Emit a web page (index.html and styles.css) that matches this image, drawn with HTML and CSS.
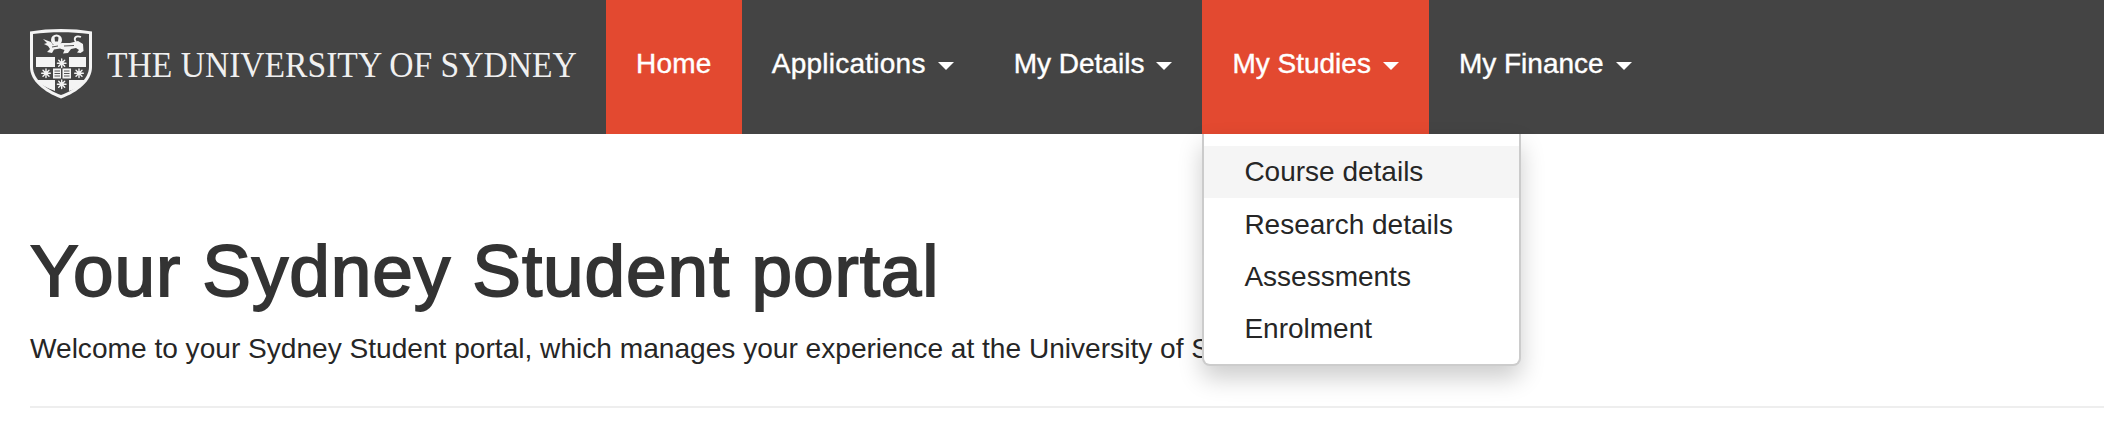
FILE: index.html
```html
<!DOCTYPE html>
<html lang="en">
<head>
<meta charset="utf-8">
<title>Your Sydney Student portal</title>
<link rel="stylesheet" href="styles.css">
</head>
<body>
<header class="navbar">
  <a class="brand" href="#">
    <svg class="crest" viewBox="0 0 62 70" aria-hidden="true">
      <path d="M0 2.5 C20 -0.8 42 -0.8 62 2.5 V38 C62 52 48 63 31 69.5 C14 63 0 52 0 38 Z" fill="#f4f4f4"/>
      <path d="M3 5 C21 2.5 41 2.5 59 5 V38 C59 50 46 60.5 31 66 C16 60.5 3 50 3 38 Z" fill="#444"/>
      <path d="M6 28 H25 V38 H6 Z M39 28 H56 V38 H39 Z" fill="#f4f4f4"/>
      <path d="M7 51 H25 V62 C17 59 11 56 7 51 Z M39 51 H55.5 C52 56 46 60 39 62 Z" fill="#f4f4f4"/>
      <g fill="#f4f4f4">
        <circle cx="26.5" cy="11" r="5.5"/>
        <path d="M13 10 L21 13 L23 16 L32 14 L40 14 L48 12 L53 15 L53.5 22 L50.5 24 L47 23.5 L49 21 L46 19 L41 20 L38 24 L33 24.5 L34.5 21 L30 19.5 L24 20.5 L22 24 L17 23 L20 20 L18 17 L14 15 L17 14 Z"/>
      </g>
      <path d="M46 13 C43 9 46 6 51 8" fill="none" stroke="#f4f4f4" stroke-width="1.8"/>
      <path d="M24.5 8.5 C25.5 7 27.5 7 28.5 8.5 L28 12.5 L25 12.5 Z" fill="#444"/>
      <path d="M34 17 L44 16.5 M22 18 L28 17" stroke="#444" stroke-width="0.9"/>
      <g stroke="#f4f4f4" stroke-width="1.4" stroke-linecap="round">
        <path d="M31.7 30 V38.6 M27.4 34.3 H36 M28.7 31.3 L34.7 37.3 M34.7 31.3 L28.7 37.3"/>
        <path d="M31.7 51 V59.6 M27.4 55.3 H36 M28.7 52.3 L34.7 58.3 M34.7 52.3 L28.7 58.3"/>
        <path d="M16 40 V48.6 M11.7 44.3 H20.3 M13 41.3 L19 47.3 M19 41.3 L13 47.3"/>
        <path d="M49 40 V48.6 M44.7 44.3 H53.3 M46 41.3 L52 47.3 M52 41.3 L46 47.3"/>
      </g>
      <path d="M23 39.5 H31 V49.5 H23 Z M32.5 39.5 H41 V49.5 H32.5 Z" fill="#f4f4f4"/>
      <path d="M24.5 42 H30 M24.5 44.5 H30 M24.5 47 H30 M34 42 H39.5 M34 44.5 H39.5 M34 47 H39.5" stroke="#444" stroke-width="0.9"/>
    </svg>
    <span class="wordmark">THE UNIVERSITY OF SYDNEY</span>
  </a>
  <nav class="menu">
    <a class="menu-link menu-link--wide is-active" href="#">Home</a>
    <a class="menu-link menu-link--wide" href="#">Applications<span class="caret"></span></a>
    <a class="menu-link" href="#">My Details<span class="caret"></span></a>
    <div class="menu-item">
      <a class="menu-link is-active" href="#">My Studies<span class="caret"></span></a>
      <ul class="dropdown">
        <li><a class="dropdown-link is-hover" href="#">Course details</a></li>
        <li><a class="dropdown-link" href="#">Research details</a></li>
        <li><a class="dropdown-link" href="#">Assessments</a></li>
        <li><a class="dropdown-link" href="#">Enrolment</a></li>
      </ul>
    </div>
    <a class="menu-link" href="#">My Finance<span class="caret"></span></a>
  </nav>
</header>
<main class="content">
  <h1 class="title">Your Sydney Student portal</h1>
  <p class="lead">Welcome to your Sydney Student portal, which manages your experience at the University of Sydney.</p>
  <hr class="rule">
</main>
</body>
</html>
```

FILE: styles.css
```css
* { box-sizing: border-box; }
html, body { margin: 0; padding: 0; }
body {
  background: #fff;
  color: #333;
  font-family: "Liberation Sans", Arial, sans-serif;
  font-size: 28px;
  line-height: 40px;
  overflow: hidden;
}
a { text-decoration: none; color: inherit; }

.navbar {
  display: flex;
  height: 134px;
  background: #444;
}
.brand {
  display: flex;
  align-items: center;
  gap: 15px;
  width: 606px;
  padding: 0 0 6px 30px;
  color: #f0f0f0;
}
.crest { width: 62px; height: 70px; flex: none; }
.wordmark {
  font-family: "Liberation Serif", "Times New Roman", serif;
  font-size: 36.5px;
  line-height: 40px;
  white-space: nowrap;
  margin-top: 2px;
  transform: scaleX(.92);
  transform-origin: left center;
}
.menu { display: flex; height: 134px; }
.menu-item { position: relative; display: flex; }
.menu-link {
  display: flex;
  align-items: center;
  height: 134px;
  padding: 0 30px 6px;
  color: #fff;
  -webkit-text-stroke: 0.4px #fff;
  white-space: nowrap;
}
.menu-link--wide { letter-spacing: .25px; }
.menu-link.is-active { background: #e34930; }
.caret {
  width: 0;
  height: 0;
  margin-left: 12px;
  margin-top: 4px;
  border-top: 8px solid #fff;
  border-left: 8px solid transparent;
  border-right: 8px solid transparent;
}
.dropdown {
  position: absolute;
  top: 134px;
  left: 0;
  width: 319px;
  margin: 0;
  padding: 12px 0 0;
  list-style: none;
  background: #fff;
  border: 2px solid rgba(0, 0, 0, .2);
  border-top: 0;
  border-radius: 0 0 8px 8px;
  box-shadow: 0 12px 24px rgba(0, 0, 0, .2);
  height: 232px;
}
.dropdown-link {
  display: flex;
  align-items: center;
  height: 52.4px;
  padding: 0 40px;
  color: #262626;
  white-space: nowrap;
}
.dropdown-link.is-hover { background: #f5f5f5; }

.content { padding: 0 0 0 30px; }
.title {
  margin: 97px 0 0;
  font-size: 73px;
  letter-spacing: 0.9px;
  line-height: 80px;
  font-weight: 400;
  -webkit-text-stroke: 1.8px #333;
  color: #333;
  white-space: nowrap;
}
.lead {
  margin: 18px 0 0;
  color: #262626;
  font-size: 28.1px;
  white-space: nowrap;
}
.rule {
  margin: 37px 0 0;
  border: 0;
  height: 2px;
  background: #eee;
}
```
